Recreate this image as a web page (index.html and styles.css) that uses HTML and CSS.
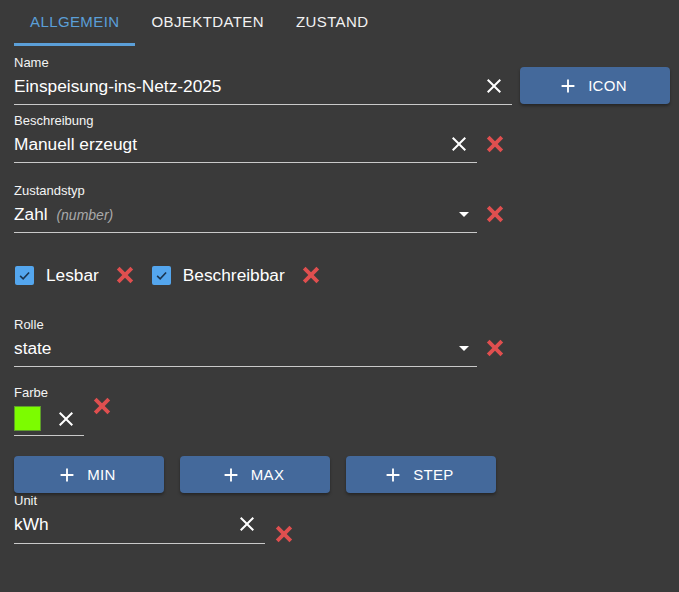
FILE: index.html
```html
<!DOCTYPE html>
<html lang="de">
<head>
<meta charset="utf-8">
<title>Objekt bearbeiten</title>
<link rel="stylesheet" href="styles.css">
</head>
<body>
<svg width="0" height="0" class="defs">
  <defs>
    <symbol id="clear" viewBox="0 0 24 24"><path d="M19 6.41L17.59 5 12 10.59 6.41 5 5 6.41 10.59 12 5 17.59 6.41 19 12 13.41 17.59 19 19 17.59 13.41 12z"/></symbol>
    <symbol id="del" viewBox="0 0 24 24"><path d="M5.2 5.2L18.8 18.8M18.8 5.2L5.2 18.8" stroke-width="3.8" stroke-linecap="butt" fill="none"/></symbol>
    <symbol id="drop" viewBox="0 0 24 24"><path d="M7 10l5 5 5-5z"/></symbol>
    <symbol id="plus" viewBox="0 0 24 24"><path d="M19 13h-6v6h-2v-6H5v-2h6V5h2v6h6v2z"/></symbol>
    <symbol id="check" viewBox="0 0 24 24"><path d="M6.5 12.5l3.8 3.8 7.5-8" fill="none" stroke-width="2"/></symbol>
  </defs>
</svg>
<div class="page">
  <nav class="tabs">
    <div class="tab active">Allgemein</div>
    <div class="tab">Objektdaten</div>
    <div class="tab">Zustand</div>
  </nav>

  <div class="row row-name">
    <div class="field w-name">
      <div class="label">Name</div>
      <div class="input">
        <span class="value">Einspeisung-ins-Netz-2025</span>
        <svg class="ico clear"><use href="#clear"/></svg>
      </div>
    </div>
    <button class="btn btn-icon"><svg class="plus"><use href="#plus"/></svg>Icon</button>
  </div>

  <div class="row row-desc">
    <div class="field w-main">
      <div class="label">Beschreibung</div>
      <div class="input">
        <span class="value">Manuell erzeugt</span>
        <svg class="ico clear"><use href="#clear"/></svg>
      </div>
    </div>
    <svg class="ico del del-end"><use href="#del"/></svg>
  </div>

  <div class="row row-type">
    <div class="field w-main">
      <div class="label">Zustandstyp</div>
      <div class="input">
        <span class="value">Zahl <em class="hint">(number)</em></span>
        <svg class="ico drop"><use href="#drop"/></svg>
      </div>
    </div>
    <svg class="ico del del-end"><use href="#del"/></svg>
  </div>

  <div class="checks">
    <label class="check"><span class="box"><svg><use href="#check"/></svg></span>Lesbar</label>
    <svg class="ico del del-check"><use href="#del"/></svg>
    <label class="check"><span class="box"><svg><use href="#check"/></svg></span>Beschreibbar</label>
    <svg class="ico del del-check"><use href="#del"/></svg>
  </div>

  <div class="row row-role">
    <div class="field w-main">
      <div class="label">Rolle</div>
      <div class="input">
        <span class="value">state</span>
        <svg class="ico drop"><use href="#drop"/></svg>
      </div>
    </div>
    <svg class="ico del del-end"><use href="#del"/></svg>
  </div>

  <div class="row row-color">
    <div class="field w-color">
      <div class="label">Farbe</div>
      <div class="input input-color">
        <span class="swatch"></span>
        <svg class="ico clear"><use href="#clear"/></svg>
      </div>
    </div>
    <svg class="ico del del-top"><use href="#del"/></svg>
  </div>

  <div class="buttons">
    <button class="btn"><svg class="plus"><use href="#plus"/></svg>Min</button>
    <button class="btn"><svg class="plus"><use href="#plus"/></svg>Max</button>
    <button class="btn"><svg class="plus"><use href="#plus"/></svg>Step</button>
  </div>

  <div class="row row-unit">
    <div class="field w-unit">
      <div class="label">Unit</div>
      <div class="input">
        <span class="value">kWh</span>
        <svg class="ico clear"><use href="#clear"/></svg>
      </div>
    </div>
    <svg class="ico del del-low"><use href="#del"/></svg>
  </div>
</div>
</body>
</html>
```
FILE: styles.css
```css
* { box-sizing: border-box; }
html, body {
  margin: 0;
  background: #3a3a3a;
  color: #ffffff;
  font-family: "Liberation Sans", Arial, sans-serif;
}
.defs { position: absolute; width: 0; height: 0; }
.page {
  width: 679px;
  height: 592px;
  padding: 0 14px;
}

/* tabs */
.tabs {
  display: flex;
  height: 46px;
}
.tab {
  position: relative;
  padding: 0 16px;
  height: 46px;
  line-height: 44px;
  font-size: 15px;
  letter-spacing: 0.4px;
  text-transform: uppercase;
  color: #f2f2f2;
}
.tab.active { color: #5b9fd8; }
.tab.active::after {
  content: "";
  position: absolute;
  left: 0; right: 0; bottom: 0;
  height: 3px;
  background: #5b9fd8;
}

/* fields */
.row { display: flex; align-items: flex-end; }
.field { display: flex; flex-direction: column; flex: none; }
.label {
  font-size: 13px;
  line-height: 14px;
  color: #f4f4f4;
}
.input {
  display: flex;
  align-items: center;
  height: 20px;
  margin-top: 6px;
  padding-bottom: 8px;
  border-bottom: 1px solid #c9c9c9;
  box-sizing: content-box;
}
.input .value {
  flex: 1;
  font-size: 17.3px;
  line-height: 20px;
  height: 20px;
  white-space: nowrap;
  color: #ffffff;
}
.hint {
  font-size: 14px;
  color: #a9a9a9;
  margin-left: 4px;
}
.w-name { width: 498px; }
.w-main { width: 463px; }
.w-color { width: 70px; }
.w-unit { width: 251px; }

.ico { width: 24px; height: 24px; flex: none; }
.clear { fill: #ffffff; margin-right: 6px; }
.drop { fill: #ffffff; margin-right: 1px; }
.del { stroke: #df4f4f; fill: none; }

.del-end { margin-left: 6px; margin-bottom: 7px; }

.row-name { margin-top: 10px; align-items: flex-start; }
.row-desc { margin-top: 9px; }
.row-type { margin-top: 21px; }

/* buttons */
.btn {
  display: flex;
  align-items: center;
  justify-content: center;
  flex: none;
  width: 150px;
  height: 37px;
  border: none;
  border-radius: 4px;
  background: #44699b;
  color: #ffffff;
  font-family: "Liberation Sans", Arial, sans-serif;
  font-size: 15px;
  letter-spacing: 0.3px;
  text-transform: uppercase;
  box-shadow: 0 2px 3px rgba(0,0,0,0.35);
  padding: 0;
}
.btn .plus { width: 22px; height: 22px; fill: #ffffff; margin-right: 9px; margin-left: -6px; }
.btn-icon { margin-left: 8px; margin-top: 11px; }

/* checkboxes */
.checks {
  display: flex;
  align-items: center;
  height: 42px;
  margin-top: 21px;
}
.check {
  display: flex;
  align-items: center;
  font-size: 17.3px;
  color: #ffffff;
}
.box {
  width: 19px;
  height: 19px;
  margin-left: 1px;
  margin-right: 12px;
  border-radius: 2px;
  background: #54a6ee;
  display: flex;
}
.box svg { width: 19px; height: 19px; stroke: #1b3550; }
.del-check { margin-left: 14px; margin-right: 14px; }

.row-role { margin-top: 22px; }

/* colour */
.row-color { margin-top: 19px; align-items: flex-start; }
.input-color { height: 25px; margin-top: 6px; padding-bottom: 4px; }
.swatch {
  width: 27px;
  height: 25px;
  background: #7cfc00;
  border: 1px solid #5e9e2a;
}
.input-color .clear { margin-left: auto; }
.del-top { margin-left: 6px; margin-top: 8px; }

.buttons {
  display: flex;
  gap: 16px;
  margin-top: 20px;
}

.row-unit { margin-top: 1px; align-items: flex-start; }
.row-unit .input { padding-bottom: 9px; }
.del-low { margin-left: 7px; margin-top: 28px; }
```
